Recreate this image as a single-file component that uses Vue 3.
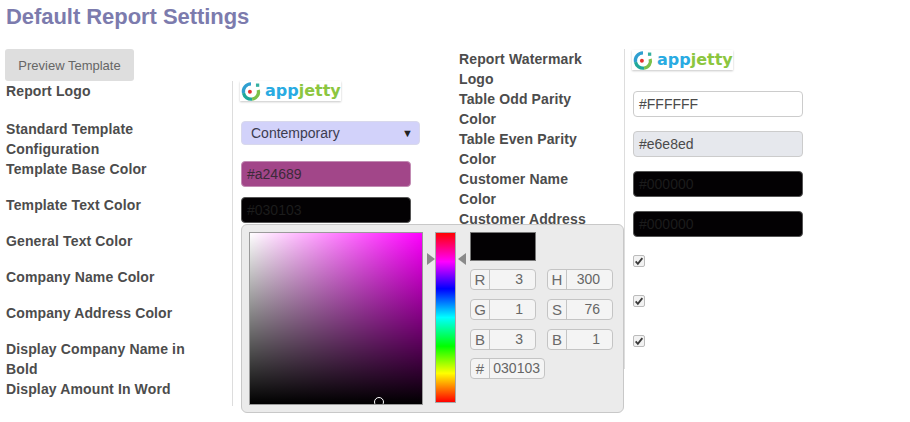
<script setup>
const leftRows = [
  { label: 'Report Logo', type: 'logo', h: 38 },
  { label: 'Standard Template Configuration', type: 'select', h: 40 },
  { label: 'Template Base Color', type: 'color', value: '#a24689', cls: 'base', h: 36 },
  { label: 'Template Text Color', type: 'color', value: '#030103', cls: 'dark', h: 36 },
  { label: 'General Text Color', h: 36 },
  { label: 'Company Name Color', h: 36 },
  { label: 'Company Address Color', h: 36 },
  { label: 'Display Company Name in Bold', h: 40 },
  { label: 'Display Amount In Word', h: 27 }
]
const rightRows = [
  { label: 'Report Watermark Logo', type: 'logo' },
  { label: 'Table Odd Parity Color', type: 'color', value: '#FFFFFF', cls: 'white' },
  { label: 'Table Even Parity Color', type: 'color', value: '#e6e8ed', cls: 'grey' },
  { label: 'Customer Name Color', type: 'color', value: '#000000', cls: 'dark' },
  { label: 'Customer Address Color', type: 'color', value: '#000000', cls: 'dark' },
  { label: '', type: 'check' },
  { label: '', type: 'check' },
  { label: '', type: 'check' }
]
const fieldsA = [['R', '3'], ['G', '1'], ['B', '3']]
const fieldsB = [['H', '300'], ['S', '76'], ['B', '1']]
</script>

<template>
  <div class="page">
    <h1 class="title">Default Report Settings</h1>
    <div class="columns">
      <section class="left">
        <button class="preview" type="button">Preview Template</button>
        <div class="rows">
          <div v-for="row in leftRows" :key="row.label" class="row" :style="{ height: row.h + 'px' }">
            <div class="label">{{ row.label }}</div>
            <div class="value">
              <div v-if="row.type === 'logo'" class="logo">
                <svg class="logo-icon" viewBox="1 1 20 18" width="22" height="20">
                  <path d="M11 3.5A7 7 0 0 0 4.2 12" fill="none" stroke="#2f9fd0" stroke-width="3" />
                  <path d="M4.2 12A7 7 0 0 0 12 17.4" fill="none" stroke="#1fa89a" stroke-width="3" />
                  <path d="M12 17.4A6.5 6.5 0 0 0 17.5 9" fill="none" stroke="#7cc04a" stroke-width="3" />
                  <circle cx="10" cy="10.6" r="1.8" fill="#e5322d" />
                  <rect x="15.5" y="3.2" width="3" height="3" fill="#35b0a0" />
                </svg>
                <span class="logo-text"><span class="app">app</span><span class="jetty">jetty</span></span>
              </div>
              <div v-else-if="row.type === 'select'" class="select">
                <span>Contemporary</span><span class="caret">▼</span>
              </div>
              <div v-else-if="row.type === 'color'" class="color" :class="row.cls">{{ row.value }}</div>
            </div>
          </div>
          <div class="picker">
            <div class="sat">
              <span class="cursor"></span>
            </div>
            <div class="hue-wrap">
              <span class="arrow arrow-l"></span>
              <div class="hue"></div>
              <span class="arrow arrow-r"></span>
            </div>
            <div class="controls">
              <div class="swatch"></div>
              <div class="field-cols">
                <div class="field-col">
                  <div v-for="f in fieldsA" :key="f[0]" class="field">
                    <span class="key">{{ f[0] }}</span><span class="num">{{ f[1] }}</span>
                  </div>
                </div>
                <div class="field-col">
                  <div v-for="f in fieldsB" :key="f[0]" class="field">
                    <span class="key">{{ f[0] }}</span><span class="num">{{ f[1] }}</span>
                  </div>
                </div>
              </div>
              <div class="field hex">
                <span class="key">#</span><span class="num">030103</span>
              </div>
            </div>
          </div>
        </div>
      </section>
      <section class="right">
        <div v-for="(row, i) in rightRows" :key="i" class="row right-row">
          <div class="label right-label">{{ row.label }}</div>
          <div class="value right-value">
            <div v-if="row.type === 'logo'" class="logo logo-right">
              <svg class="logo-icon" viewBox="1 1 20 18" width="22" height="20">
                <path d="M11 3.5A7 7 0 0 0 4.2 12" fill="none" stroke="#2f9fd0" stroke-width="3" />
                <path d="M4.2 12A7 7 0 0 0 12 17.4" fill="none" stroke="#1fa89a" stroke-width="3" />
                <path d="M12 17.4A6.5 6.5 0 0 0 17.5 9" fill="none" stroke="#7cc04a" stroke-width="3" />
                <circle cx="10" cy="10.6" r="1.8" fill="#e5322d" />
                <rect x="15.5" y="3.2" width="3" height="3" fill="#35b0a0" />
              </svg>
              <span class="logo-text"><span class="app">app</span><span class="jetty">jetty</span></span>
            </div>
            <div v-else-if="row.type === 'color'" class="color" :class="row.cls">{{ row.value }}</div>
            <div v-else class="check">
              <svg viewBox="0 0 12 12" width="10" height="10">
                <path d="M2 6.5l2.6 2.8L10 2.5" fill="none" stroke="#3a3a3a" stroke-width="2.2" />
              </svg>
            </div>
          </div>
        </div>
      </section>
    </div>
  </div>
</template>

<style>
html, body { background: #fff; }
</style>

<style scoped>
.page {
  width: 910px;
  height: 422px;
  overflow: hidden;
  font-family: "Liberation Sans", Arial, sans-serif;
  color: #4c4c4c;
  box-sizing: border-box;
  padding-top: 4px;
}
.title {
  margin: 0 0 0 6px;
  font-size: 22px;
  line-height: 26px;
  font-weight: 700;
  letter-spacing: -0.05px;
  color: #7c7bad;
}
.columns {
  display: flex;
  align-items: flex-start;
  margin-top: 19px;
  padding-left: 5px;
}
.left { width: 454px; flex: none; }
.preview {
  display: block;
  width: 129px;
  height: 32px;
  padding: 0;
  border: none;
  border-radius: 3px;
  background: #dedede;
  color: #666;
  font: 13px "Liberation Sans", Arial, sans-serif;
}
.rows { position: relative; }
.row { display: flex; }
.label {
  width: 227px;
  flex: none;
  box-sizing: border-box;
  padding: 0 30px 0 1px;
  font-size: 14px;
  line-height: 20px;
  font-weight: 700;
  letter-spacing: 0.13px;
  color: #4c4c4c;
}
.value {
  flex: 1;
  box-sizing: border-box;
  border-left: 1px solid #ddd;
  padding-left: 8px;
}
.logo {
  display: flex;
  align-items: center;
  width: 101px;
  height: 20px;
  margin-left: -1px;
  background: #fff;
  box-shadow: 0 1px 2px rgba(0, 0, 0, 0.22);
  overflow: hidden;
}
.logo-right { margin-top: 1px; }
.logo-icon { flex: none; }
.logo-text {
  margin-left: 3px;
  font-family: "DejaVu Sans", sans-serif;
  font-size: 16px;
  line-height: 20px;
  font-weight: 700;
  white-space: nowrap;
}
.app { color: #29abe2; }
.jetty { color: #8cc63f; }
.select {
  display: flex;
  align-items: center;
  justify-content: space-between;
  box-sizing: border-box;
  width: 179px;
  height: 24px;
  margin-top: 2px;
  padding: 0 6px 0 9px;
  border: 1px solid #d8d8ec;
  border-radius: 4px;
  background: #d2d2fa;
  color: #3c3c50;
  font-size: 14px;
}
.caret { font-size: 11px; color: #222; }
.color {
  box-sizing: border-box;
  width: 170px;
  height: 26px;
  margin-top: 2px;
  padding-left: 5px;
  border: 1px solid #ccc;
  border-radius: 4px;
  font-size: 14px;
  line-height: 24px;
}
.base { background: #a24689; color: #3c2a3a; border-color: #c28bb3; }
.dark { background: #030103; color: #1c1c1c; border-color: #555; }
.white { background: #fff; color: #4a4a4a; }
.grey { background: #e6e8ed; color: #4a4a4a; }
.picker {
  position: absolute;
  left: 236px;
  top: 143px;
  display: flex;
  box-sizing: border-box;
  width: 383px;
  height: 189px;
  padding: 7px 0 0 7px;
  background: #ebebeb;
  border: 1px solid #c8c8c8;
  border-radius: 6px;
}
.sat {
  position: relative;
  flex: none;
  width: 172px;
  height: 171px;
  overflow: hidden;
  border: 1px solid #9a9a9a;
  background:
    linear-gradient(to bottom, transparent, #000),
    linear-gradient(to right, #fff, #f0f);
}
.cursor {
  position: absolute;
  left: 124px;
  top: 164px;
  width: 10px;
  height: 10px;
  box-sizing: border-box;
  border: 1px solid #fff;
  border-radius: 50%;
}
.hue-wrap {
  position: relative;
  flex: none;
  margin-left: 12px;
}
.hue {
  box-sizing: border-box;
  width: 21px;
  height: 171px;
  border: 1px solid #a8a8a8;
  background: linear-gradient(to bottom, #f00, #f0f 17%, #00f 33%, #0ff 50%, #0f0 67%, #ff0 83%, #f00);
}
.arrow {
  position: absolute;
  top: 21px;
  width: 0;
  height: 0;
  border-top: 6px solid transparent;
  border-bottom: 6px solid transparent;
}
.arrow-l { left: -8px; border-left: 8px solid #8a8a8a; }
.arrow-r { right: -10px; border-right: 8px solid #8a8a8a; }
.controls {
  flex: none;
  margin-left: 14px;
}
.swatch {
  box-sizing: border-box;
  width: 66px;
  height: 29px;
  background: #030103;
  border: 1px solid #777;
}
.field-cols { display: flex; gap: 11px; margin-top: 8px; }
.field-col { display: flex; flex-direction: column; gap: 9px; }
.field {
  display: flex;
  box-sizing: border-box;
  width: 66px;
  height: 21px;
  border: 1px solid #c4c4c4;
  border-radius: 4px;
  background: #f4f4f4;
  font-size: 14px;
  line-height: 19px;
  color: #666;
}
.key {
  flex: none;
  width: 19px;
  box-sizing: border-box;
  text-align: center;
  border-right: 1px solid #c4c4c4;
  font-size: 15px;
  color: #6a6a6a;
}
.num {
  flex: 1;
  text-align: right;
  padding-right: 12px;
}
.hex { width: 75px; margin-top: 8px; }
.hex .num { padding-right: 4px; }
.right { flex: none; }
.right-row { height: 40px; }
.right-label {
  width: 165px;
  padding: 0 30px 0 0;
}
.right-value { width: 200px; }
.right-row .color { margin-top: 2px; }
.check {
  display: flex;
  align-items: center;
  justify-content: center;
  box-sizing: border-box;
  width: 12px;
  height: 12px;
  margin-top: 6px;
  border: 1px solid #bbb;
  border-radius: 2px;
  background: #f2f2f2;
}
</style>
